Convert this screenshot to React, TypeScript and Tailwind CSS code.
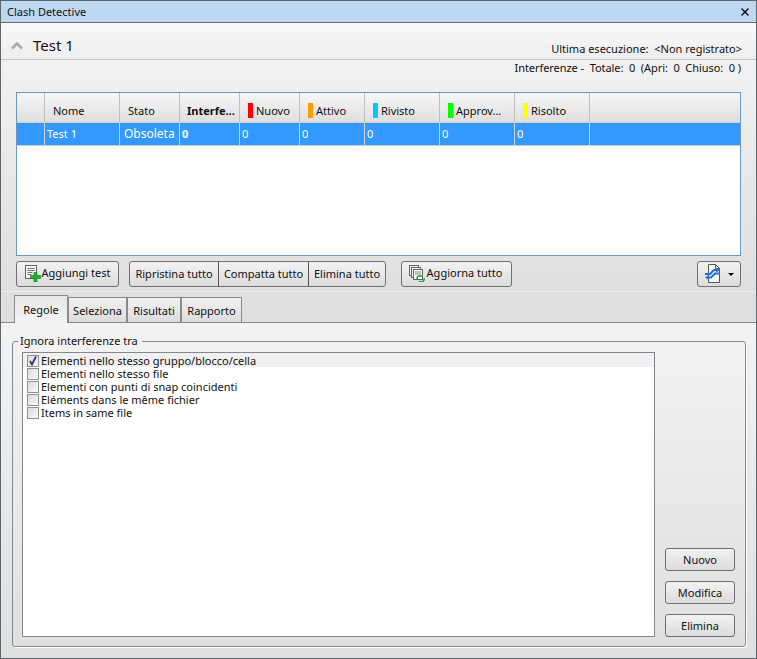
import { X } from 'lucide-react';

const columns = [
  { label: '', width: 'w-[28px]', value: '' },
  { label: 'Nome', width: 'w-[75px]', value: 'Test 1', pad: 'pl-[8px]' },
  { label: 'Stato', width: 'w-[60px]', value: 'Obsoleta', pad: 'pl-[8px]', big: true },
  { label: 'Interfe...', width: 'w-[60px]', value: '0', bold: true, pad: 'pl-[7px]' },
  { label: 'Nuovo', width: 'w-[60px]', value: '0', color: 'bg-[#ff0000]' },
  { label: 'Attivo', width: 'w-[65px]', value: '0', color: 'bg-[#ff9a00]' },
  { label: 'Rivisto', width: 'w-[75px]', value: '0', color: 'bg-[#00c8ff]' },
  { label: 'Approv...', width: 'w-[75px]', value: '0', color: 'bg-[#00ff00]' },
  { label: 'Risolto', width: 'w-[75px]', value: '0', color: 'bg-[#ffff00]' },
];

const rules = [
  { label: 'Elementi nello stesso gruppo/blocco/cella', checked: true },
  { label: 'Elementi nello stesso file' },
  { label: 'Elementi con punti di snap coincidenti' },
  { label: 'Eléments dans le même fichier' },
  { label: 'Items in same file' },
];

const tabs = [
  { label: 'Seleziona', width: 'w-[59px]' },
  { label: 'Risultati', width: 'w-[54px]' },
  { label: 'Rapporto', width: 'w-[61px]' },
];

const btn = 'flex items-center justify-center rounded-[3px] border border-[#707070] bg-gradient-to-b from-[#f2f2f2] to-[#dcdcdc] text-[#111]';

const AddIcon = () => (
  <svg width="16" height="17" viewBox="0 0 16 17" className="shrink-0">
    <rect x="0.5" y="0.5" width="11" height="13" fill="#f4f4f4" stroke="#666" />
    <path d="M2.5 3.5h7M2.5 5.5h7M2.5 7.5h5M2.5 9.5h4" stroke="#777" />
    <path d="M9 7.5h3v3h3.5v3H12V17H9v-3.5H5.5v-3H9z" fill="#1fae2e" stroke="#0c7a18" strokeWidth="0.6" />
  </svg>
);

const RefreshIcon = () => (
  <svg width="17" height="17" viewBox="0 0 17 17" className="shrink-0">
    <rect x="0.5" y="0.5" width="9" height="10" fill="#eee" stroke="#666" />
    <rect x="2.5" y="2.5" width="9" height="10" fill="#eee" stroke="#666" />
    <rect x="4.5" y="4.5" width="9" height="10" fill="#f6f6f6" stroke="#666" />
    <path d="M6 7h6M6 9h6" stroke="#888" />
    <path d="M8 14a3 3 0 0 1 5-2.5M15 13a3 3 0 0 1-5 3" fill="none" stroke="#1fa32c" strokeWidth="1.5" />
  </svg>
);

const ExportIcon = () => (
  <svg width="17" height="20" viewBox="0 0 17 20" className="shrink-0">
    <path d="M4.5 0.5h7l4 4v14h-11z" fill="#f6f6f6" stroke="#555" />
    <path d="M11.5 0.5v4h4" fill="none" stroke="#555" />
    <path d="M1 10h5l4-4h3" fill="none" stroke="#1f6fd8" strokeWidth="1.8" />
    <path d="M12 3.5 L16 6 L12 8.5z" fill="#1f6fd8" />
    <path d="M16 9.5h-5l-4 4H4" fill="none" stroke="#1f6fd8" strokeWidth="1.8" />
    <path d="M5 11 L1 13.5 L5 16z" fill="#1f6fd8" />
  </svg>
);

const Check = ({ checked }: { checked?: boolean }) => (
  <span className="relative h-[12px] w-[12px] shrink-0 border border-[#8e8f8f] bg-gradient-to-br from-[#dcdcdc] to-[#f8f8f8]">
    {checked && (
      <svg width="10" height="10" viewBox="0 0 10 10" className="absolute left-0 top-0">
        <path d="M2 5 L4 8.5 L8 0.5" fill="none" stroke="#31318c" strokeWidth="1.8" />
      </svg>
    )}
  </span>
);

export default function App() {
  return (
    <div className="flex h-[659px] w-[757px] flex-col overflow-hidden border border-[#5c666b] font-['Noto_Sans',sans-serif] text-[11px] leading-[14px] text-[#111]">
      {/* Title bar */}
      <div className="flex h-[22px] shrink-0 items-center justify-between border-b border-[#60696e] bg-[#bdd8f1] pl-[6px] pr-[5px]">
        <span>Clash Detective</span>
        <X size={12} strokeWidth={3} className="text-[#111]" />
      </div>

      {/* Header */}
      <div className="flex h-[37px] shrink-0 items-start justify-between border-b border-[#c4c4c4] bg-gradient-to-b from-[#f9f9f9] to-[#eeeeee] pr-[14px]">
        <div className="flex items-center pl-[9px] pt-[13px]">
          <svg width="14" height="9" viewBox="0 0 14 9">
            <path d="M2 7.5 L7 2.5 L12 7.5" fill="none" stroke="#a8a8a8" strokeWidth="2.6" />
          </svg>
          <span className="ml-[9px] text-[15px] leading-[18px]">Test 1</span>
        </div>
        <span className="pt-[19px]">Ultima esecuzione:&nbsp; &lt;Non registrato&gt;</span>
      </div>

      {/* Test panel */}
      <div className="flex h-[231px] shrink-0 flex-col bg-gradient-to-b from-[#f1f1f1] to-[#dfdfdf] px-[15px]">
        <div className="flex h-[32px] shrink-0 justify-end pt-[1px]">
          <span className="whitespace-pre tracking-[-0.06px]">Interferenze -  Totale:  0  (Apri:  0  Chiuso:  0 )</span>
        </div>

        <div className="flex h-[164px] w-[725px] shrink-0 flex-col border border-[#6c97c4] bg-white">
          <div className="flex h-[30px] shrink-0 border-b border-[#cfcfcf] bg-gradient-to-b from-[#f7f7f7] to-[#dedede]">
            {columns.map((col, i) => (
              <div
                key={i}
                className={`flex shrink-0 items-center gap-[3px] border-r border-[#c0c0c0] pt-[6px] ${col.width} ${col.color ? 'pl-[8px]' : col.pad ?? ''} ${col.bold ? 'font-bold' : ''}`}
              >
                {col.color && <span className={`h-[15px] w-[5px] ${col.color}`} />}
                {col.label}
              </div>
            ))}
          </div>
          <div className="flex h-[23px] shrink-0 border-b border-[#cfcfcf] bg-[#3399ff] text-white">
            {columns.map((col, i) => (
              <div
                key={i}
                className={`flex shrink-0 items-center border-r border-[#c8d4e0] pl-[2px] ${col.width} ${col.big ? 'pl-[4px] text-[12px]' : ''} ${col.bold ? 'font-bold' : ''}`}
              >
                {col.value}
              </div>
            ))}
          </div>
        </div>

        <div className="mt-[5px] flex h-[26px] shrink-0">
          <div className={`${btn} w-[103px] gap-[1px] pb-[2px]`}>
            <AddIcon />
            <span>Aggiungi test</span>
          </div>
          <div className={`${btn} ml-[10px] w-[257px] !justify-start`}>
            <span className="flex h-full w-[89px] items-center justify-center border-r border-[#555]">Ripristina tutto</span>
            <span className="flex h-full w-[90px] items-center justify-center border-r border-[#555]">Compatta tutto</span>
            <span className="flex h-full flex-1 items-center justify-center">Elimina tutto</span>
          </div>
          <div className={`${btn} ml-[15px] w-[111px] gap-[1px] pb-[2px] pr-[2px]`}>
            <RefreshIcon />
            <span>Aggiorna tutto</span>
          </div>
          <div className={`${btn} ml-auto w-[44px] gap-[7px]`}>
            <ExportIcon />
            <span className="h-0 w-0 border-x-[3px] border-t-[3px] border-x-transparent border-t-black" />
          </div>
        </div>
      </div>

      {/* Tabs */}
      <div className="flex h-[32px] shrink-0 items-end border-b border-t border-b-[#868686] border-t-[#ececec] bg-[#dfdfdf] pl-[13px]">
        <div className="-mb-[1px] flex h-[28px] w-[54px] items-center justify-center border border-b-0 border-[#8a8a8a] bg-gradient-to-b from-[#e8e8e8] to-[#f3f3f3]">
          Regole
        </div>
        {tabs.map(tab => (
          <div
            key={tab.label}
            className={`flex h-[25px] items-center justify-center border border-b-0 border-[#8a8a8a] bg-gradient-to-b from-[#f2f2f2] to-[#dcdcdc] pt-[2px] ${tab.width}`}
          >
            {tab.label}
          </div>
        ))}
      </div>

      {/* Rules */}
      <div className="flex min-h-0 flex-1 flex-col bg-gradient-to-b from-[#f3f3f3] to-[#dfdfdf] pb-[11px] pl-[11px] pr-[10px] pt-[18px]">
        <div className="relative flex flex-1 rounded-[3px] border border-[#808a90] pb-[9px] pl-[9px] pr-[10px] pt-[10px] shadow-[1px_1px_0_#fff]">
          <span className="absolute -top-[8px] left-[5px] bg-[#f2f2f2] pl-[2px] pr-[4px]">Ignora interferenze tra</span>
          <div className="w-[633px] border border-[#828790] bg-white leading-[13px]">
            {rules.map((rule, i) => (
              <div key={rule.label} className={`flex items-center gap-[2px] pl-[4px] ${i === 0 ? 'h-[14px] bg-[#f0f0f0] pt-[1px]' : 'h-[13px]'}`}>
                <Check checked={rule.checked} />
                <span className="whitespace-nowrap">{rule.label}</span>
              </div>
            ))}
          </div>
          <div className="flex flex-1 flex-col items-end justify-end gap-[10px]">
            <div className={`${btn} h-[23px] w-[70px]`}>Nuovo</div>
            <div className={`${btn} h-[23px] w-[70px]`}>Modifica</div>
            <div className={`${btn} h-[23px] w-[70px]`}>Elimina</div>
          </div>
        </div>
      </div>
    </div>
  );
}
